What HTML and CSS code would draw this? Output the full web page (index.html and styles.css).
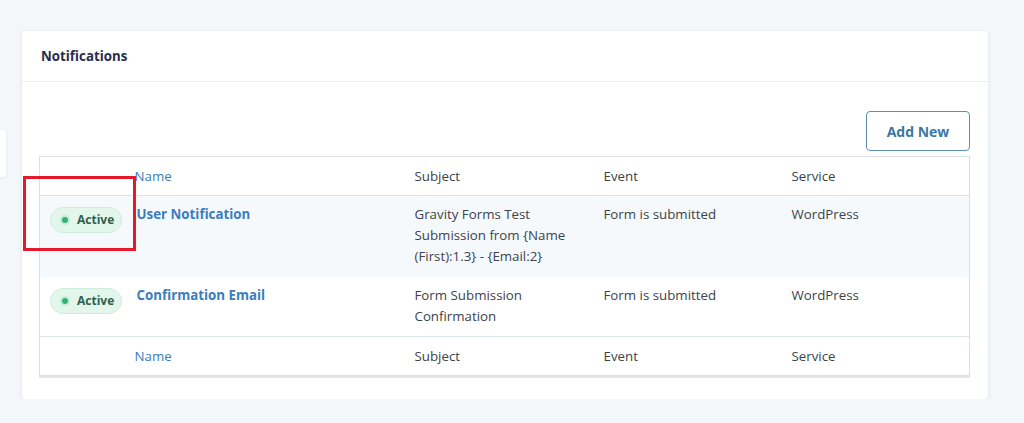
FILE: index.html
```html
<!DOCTYPE html>
<html lang="en">
<head>
    <meta charset="UTF-8">
    <meta name="viewport" content="width=device-width, initial-scale=1.0">
    <title>Notifications</title>
    <link rel="stylesheet" href="styles.css">
</head>
<body>
    <div class="side-tab"></div>

    <div class="panel">
        <div class="panel-header">
            <h2>Notifications</h2>
        </div>
        <div class="panel-body">
            <div class="actions">
                <a class="button" href="#">Add New</a>
            </div>

            <table class="list">
                <colgroup>
                    <col class="col-status">
                    <col class="col-name">
                    <col class="col-subject">
                    <col class="col-event">
                    <col>
                </colgroup>
                <thead>
                    <tr>
                        <th></th>
                        <th><a href="#">Name</a></th>
                        <th>Subject</th>
                        <th>Event</th>
                        <th>Service</th>
                    </tr>
                </thead>
                <tbody>
                    <tr class="alt">
                        <td class="status"><span class="badge"><span class="dot"></span>Active</span></td>
                        <td class="name"><a class="row-title" href="#">User Notification</a></td>
                        <td>Gravity Forms Test Submission from {Name (First):1.3} - {Email:2}</td>
                        <td>Form is submitted</td>
                        <td>WordPress</td>
                    </tr>
                    <tr class="short">
                        <td class="status"><span class="badge"><span class="dot"></span>Active</span></td>
                        <td class="name"><a class="row-title" href="#">Confirmation Email</a></td>
                        <td>Form Submission Confirmation</td>
                        <td>Form is submitted</td>
                        <td>WordPress</td>
                    </tr>
                </tbody>
                <tfoot>
                    <tr>
                        <th></th>
                        <th><a href="#">Name</a></th>
                        <th>Subject</th>
                        <th>Event</th>
                        <th>Service</th>
                    </tr>
                </tfoot>
            </table>
        </div>

        <!-- annotation box drawn over the status column -->
        <div class="callout"></div>
    </div>
</body>
</html>
```

FILE: styles.css
```css
body {
    margin: 0;
    padding: 31px 36px 0 22px;
    background-color: #f4f7fa;
    font-family: "Open Sans", "Noto Sans", sans-serif;
    font-size: 13.3px;
    color: #3c434a;
}

.side-tab {
    position: absolute;
    left: 0;
    top: 130px;
    width: 6px;
    height: 47px;
    background-color: #fff;
    border-radius: 0 3px 3px 0;
    box-shadow: 0 1px 3px rgba(30, 50, 90, 0.08);
}

.panel {
    position: relative;
    background-color: #fff;
    border-radius: 4px;
    box-shadow: 0 1px 4px rgba(30, 50, 90, 0.1);
}

.panel-header {
    padding: 0 19px;
    height: 50px;
    display: flex;
    align-items: center;
    border-bottom: 1px solid #ebeef3;
}

.panel-header h2 {
    margin: 0;
    font-size: 13.3px;
    font-weight: 700;
    color: #2a2d4a;
}

.panel-body {
    padding: 29px 18px 23px 17px;
}

.actions {
    display: flex;
    justify-content: flex-end;
    margin-bottom: 5px;
}

.button {
    display: inline-flex;
    align-items: center;
    justify-content: center;
    width: 102px;
    height: 38px;
    border: 1px solid #5b8fb6;
    border-radius: 4px;
    color: #3b77a3;
    font-size: 14px;
    font-weight: 700;
    text-decoration: none;
}

.list {
    width: 100%;
    table-layout: fixed;
    border-collapse: collapse;
    border: 1px solid #dcdfe6;
    box-shadow: 0 2px 0 #e4e5e8;
}

.col-status {
    width: 85px;
}

.col-name {
    width: 280px;
}

.col-subject {
    width: 189px;
}

.col-event {
    width: 188px;
}

.list th,
.list td {
    text-align: left;
    font-weight: 400;
    vertical-align: top;
    line-height: 21px;
    padding: 0 10px;
}

.list th {
    height: 37px;
    padding-top: 1px;
    vertical-align: middle;
}

.list thead tr {
    border-bottom: 1px solid #dde1ea;
}

.list tfoot tr {
    border-top: 1px solid #dde1ea;
}

.list td {
    padding-top: 8px;
    height: 70px;
}

.list tr.short td {
    height: 48px;
}

.list tr.alt {
    background-color: #f6f9fc;
}

.list a {
    color: #3b7dbd;
    text-decoration: none;
}

.list td.name {
    padding-left: 12px;
}

.list td.status {
    padding: 11px 0 0 10px;
}

.row-title {
    font-weight: 700;
}

.badge {
    display: inline-flex;
    align-items: center;
    gap: 9px;
    height: 24px;
    padding: 0 7px 0 11px;
    border: 1px solid #cdeede;
    border-radius: 13px;
    background-color: #e3f6ec;
    color: #31604a;
    font-size: 12px;
    font-weight: 700;
    line-height: 1;
}

.dot {
    width: 6px;
    height: 6px;
    border-radius: 50%;
    background-color: #35b374;
    box-shadow: 0 0 0 2px #c6ecd8;
}

.callout {
    position: absolute;
    left: 1px;
    top: 145px;
    width: 107px;
    height: 69px;
    border: 3px solid #e5192a;
}
```
